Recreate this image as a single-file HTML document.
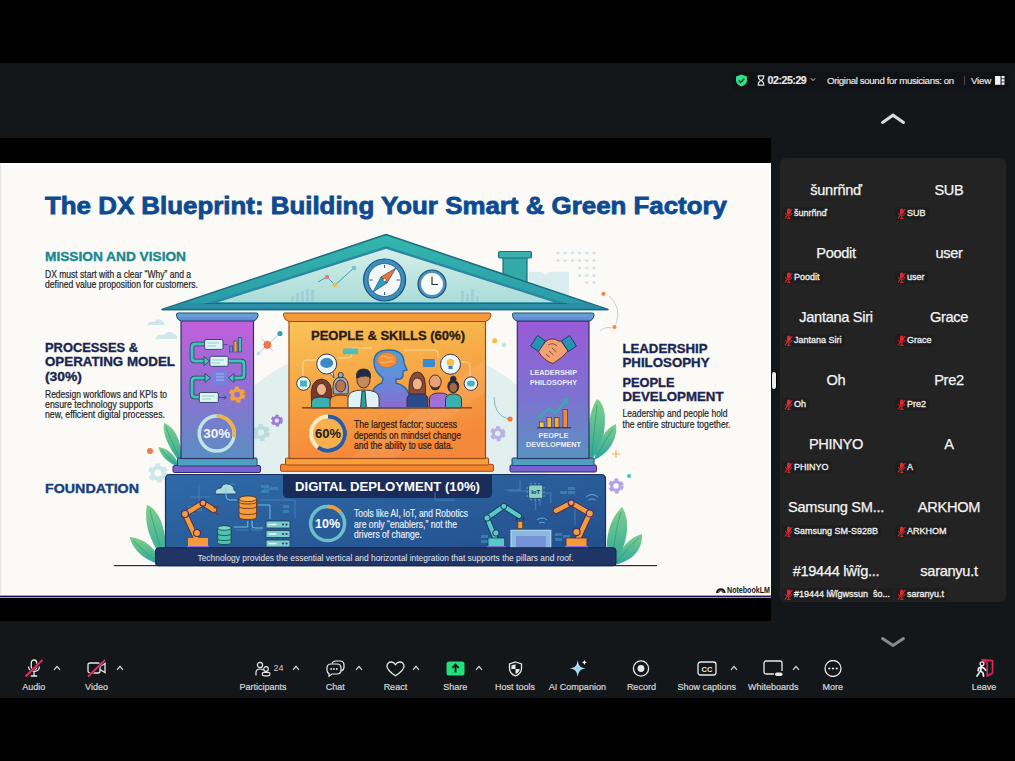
<!DOCTYPE html>
<html><head><meta charset="utf-8">
<style>
*{margin:0;padding:0;box-sizing:border-box}
html,body{width:1015px;height:761px;overflow:hidden;background:#000;font-family:"Liberation Sans",sans-serif}
.a{position:absolute;white-space:nowrap}
#win{position:absolute;left:0;top:63px;width:1015px;height:635px;background:#14171a}
#share{position:absolute;left:0;top:138px;width:771px;height:483px;background:#000}
#slide{position:absolute;left:0;top:163px;width:771px;height:435px;background:#fbfaf7;overflow:hidden}
#panel{position:absolute;left:780px;top:158px;width:226px;height:444px;background:#232323;border-radius:6px}
.pill{position:absolute;left:732px;top:72px;width:277px;height:18px;background:#101215;border-radius:5px}
.tb{color:#ececec;font-size:10px;-webkit-text-stroke:0.15px #ececec}
.lbl{position:absolute;top:682px;color:#d6d6d6;-webkit-text-stroke:0.2px #d6d6d6;font-size:9px;white-space:nowrap;text-align:center}
.big{position:absolute;color:#f4f4f4;-webkit-text-stroke:0.25px #f4f4f4;font-size:14.6px;letter-spacing:-0.3px;white-space:nowrap;text-align:center;width:112px}
.sm{position:absolute;height:13px;background:#1e1e1e;-webkit-text-stroke:0.3px #f0f0f0;border-radius:3px;color:#f0f0f0;font-size:9px;line-height:13px;white-space:nowrap;padding-left:12px;padding-right:3px}
.sm svg{position:absolute;left:2px;top:1px}
</style></head>
<body>
<div id="win"></div>
<div class="pill"></div>
<!-- top bar -->
<svg class="a" style="left:735px;top:74px" width="13" height="13" viewBox="0 0 13 13"><path d="M6.5 0.5 L12 2.5 V6.5 C12 9.5 9.5 11.5 6.5 12.5 C3.5 11.5 1 9.5 1 6.5 V2.5 Z" fill="#2fe08b"/><path d="M3.8 6.6 L5.7 8.4 L9.2 4.8" stroke="#0e3a22" stroke-width="1.4" fill="none"/></svg>
<svg class="a" style="left:757px;top:75px" width="8" height="11" viewBox="0 0 8 11"><path d="M0.6 0.8 H7.4 M0.6 10.2 H7.4 M1.5 0.8 V3.2 L3.6 5.5 L1.5 7.8 V10.2 M6.5 0.8 V3.2 L4.4 5.5 L6.5 7.8 V10.2" stroke="#e0e0e0" stroke-width="1.2" fill="none"/></svg>
<div class="a tb" style="left:767.5px;top:74.3px;font-weight:bold;font-size:10.6px;letter-spacing:-0.45px">02:25:29</div>
<svg class="a" style="left:810px;top:77px" width="6" height="5" viewBox="0 0 6 5"><path d="M0.8 1.2 L3 3.6 L5.2 1.2" stroke="#ccc" stroke-width="1" fill="none"/></svg>
<div class="a tb" style="left:827px;top:75px;font-size:9.7px;letter-spacing:-0.36px">Original sound for musicians: on</div>
<div class="a" style="left:963.5px;top:76px;width:1px;height:9px;background:#45484b"></div>
<div class="a tb" style="left:971px;top:75px;font-size:9.7px;letter-spacing:-0.2px">View</div>
<svg class="a" style="left:995px;top:75.5px" width="10" height="9" viewBox="0 0 10 9"><rect x="0" y="0" width="5.5" height="8.8" fill="#f2f2f2"/><rect x="6.5" y="0" width="3" height="2.4" fill="#f2f2f2"/><rect x="6.5" y="3.2" width="3" height="2.4" fill="#f2f2f2"/><rect x="6.5" y="6.4" width="3" height="2.4" fill="#f2f2f2"/></svg>
<svg class="a" style="left:880px;top:112px" width="26" height="14" viewBox="0 0 26 14"><path d="M2.5 10.5 L13 3.2 L23.5 10.5" stroke="#dcdcdc" stroke-width="3" stroke-linecap="round" fill="none"/></svg>
<svg class="a" style="left:880px;top:634px" width="26" height="14" viewBox="0 0 26 14"><path d="M2.5 4.5 L13 11.5 L23.5 4.5" stroke="#8a8a8a" stroke-width="3" stroke-linecap="round" fill="none"/></svg>

<div id="share"></div>
<div id="slide">
<svg width="771" height="435" viewBox="0 163 771 435" style="position:absolute;left:0;top:0">
<defs>
<linearGradient id="gL" x1="0" y1="0" x2="0" y2="1"><stop offset="0" stop-color="#c25fdc"/><stop offset="0.5" stop-color="#8f70d2"/><stop offset="1" stop-color="#5b8dc2"/></linearGradient>
<linearGradient id="gR" x1="0" y1="0" x2="0" y2="1"><stop offset="0" stop-color="#9a5ad8"/><stop offset="0.55" stop-color="#7c72d0"/><stop offset="1" stop-color="#5a92c0"/></linearGradient>
<linearGradient id="gC" x1="0" y1="0" x2="0.25" y2="1"><stop offset="0" stop-color="#f9c457"/><stop offset="0.45" stop-color="#f7a946"/><stop offset="1" stop-color="#f5883a"/></linearGradient>
<linearGradient id="gRoof" x1="0" y1="0" x2="0" y2="1"><stop offset="0" stop-color="#33b8ae"/><stop offset="1" stop-color="#2a9aa8"/></linearGradient>
<linearGradient id="gRoofIn" x1="0" y1="0" x2="0" y2="1"><stop offset="0" stop-color="#d4efea"/><stop offset="1" stop-color="#a9dcd8"/></linearGradient>
<linearGradient id="gF" x1="0" y1="0" x2="1" y2="1"><stop offset="0" stop-color="#2f6aa8"/><stop offset="1" stop-color="#234f8c"/></linearGradient>
<linearGradient id="gCap" x1="0" y1="0" x2="0" y2="1"><stop offset="0" stop-color="#5cb0d8"/><stop offset="1" stop-color="#6a7ed0"/></linearGradient><linearGradient id="gLeaf" x1="0" y1="0" x2="0" y2="1"><stop offset="0" stop-color="#7fd08a"/><stop offset="1" stop-color="#2aa59a"/></linearGradient>
</defs>
<rect x="0" y="163" width="771" height="435" fill="#fbfaf7"/><rect x="0" y="163" width="771" height="2" fill="#ffffff"/><rect x="769" y="163" width="2" height="433" fill="#ffffff"/><rect x="0" y="163" width="1.2" height="433" fill="#e6e6e6"/>
<!-- pale background blobs -->
<ellipse cx="386" cy="452" rx="165" ry="110" fill="#e2efef"/>
<path d="M147 325 q3 -5 7 -3 q4 -5 8 -1 q3 1 2 4 z" fill="#cfe6ec"/>
<path d="M155 339 q3 -6 9 -4 q5 -6 10 -1 q4 1 3 5 z" fill="#d0e8ec"/>
<!-- title -->
<text x="45" y="214.3" textLength="682" lengthAdjust="spacingAndGlyphs" font-family="Liberation Sans" font-weight="bold" font-size="23.6" fill="#0e4a92" stroke="#0e4a92" stroke-width="0.8">The DX Blueprint: Building Your Smart &amp; Green Factory</text>
<!-- left texts -->
<text x="45" y="261" textLength="141" lengthAdjust="spacingAndGlyphs" font-family="Liberation Sans" font-weight="bold" font-size="13" fill="#1a8792" stroke="#1a8792" stroke-width="0.35">MISSION AND VISION</text>
<g font-family="Liberation Sans" font-size="10.6" fill="#262626" stroke="#262626" stroke-width="0.22">
<text x="45" y="277.5" textLength="146" lengthAdjust="spacingAndGlyphs">DX must start with a clear “Why” and a</text>
<text x="45" y="287.5" textLength="153" lengthAdjust="spacingAndGlyphs">defined value proposition for customers.</text>
</g>
<g font-family="Liberation Sans" font-weight="bold" font-size="13" fill="#1a2650" stroke="#1a2650" stroke-width="0.35">
<text x="45" y="352" textLength="93" lengthAdjust="spacingAndGlyphs">PROCESSES &amp;</text>
<text x="45" y="366" textLength="130" lengthAdjust="spacingAndGlyphs">OPERATING MODEL</text>
<text x="45" y="380.5" textLength="37" lengthAdjust="spacingAndGlyphs">(30%)</text>
</g>
<g font-family="Liberation Sans" font-size="10.6" fill="#262626" stroke="#262626" stroke-width="0.22">
<text x="45" y="397.5" textLength="122" lengthAdjust="spacingAndGlyphs">Redesign workflows and KPIs to</text>
<text x="45" y="407.5" textLength="108" lengthAdjust="spacingAndGlyphs">ensure technology supports</text>
<text x="45" y="417.5" textLength="120" lengthAdjust="spacingAndGlyphs">new, efficient digital processes.</text>
</g>
<text x="45" y="492.5" textLength="94" lengthAdjust="spacingAndGlyphs" font-family="Liberation Sans" font-weight="bold" font-size="13" fill="#17407c" stroke="#17407c" stroke-width="0.35">FOUNDATION</text>
<!-- right texts -->
<g font-family="Liberation Sans" font-weight="bold" font-size="13" fill="#1a2650" stroke="#1a2650" stroke-width="0.35">
<text x="622.5" y="353" textLength="85" lengthAdjust="spacingAndGlyphs">LEADERSHIP</text>
<text x="622.5" y="367" textLength="87" lengthAdjust="spacingAndGlyphs">PHILOSOPHY</text>
<text x="622.5" y="386.5" textLength="52" lengthAdjust="spacingAndGlyphs">PEOPLE</text>
<text x="622.5" y="400.7" textLength="101" lengthAdjust="spacingAndGlyphs">DEVELOPMENT</text>
</g>
<g font-family="Liberation Sans" font-size="10.6" fill="#262626" stroke="#262626" stroke-width="0.22">
<text x="622.5" y="417" textLength="105" lengthAdjust="spacingAndGlyphs">Leadership and people hold</text>
<text x="622.5" y="427.5" textLength="108" lengthAdjust="spacingAndGlyphs">the entire structure together.</text>
</g>
<!-- dots pattern near chimney -->
<g fill="#cfe6ea"><circle cx="558" cy="253" r="1.6"/><circle cx="565.2" cy="253" r="1.6"/><circle cx="572.4" cy="253" r="1.6"/><circle cx="579.6" cy="253" r="1.6"/><circle cx="586.8" cy="253" r="1.6"/><circle cx="594" cy="253" r="1.6"/><circle cx="558" cy="260.5" r="1.6"/><circle cx="565.2" cy="260.5" r="1.6"/><circle cx="572.4" cy="260.5" r="1.6"/><circle cx="579.6" cy="260.5" r="1.6"/><circle cx="586.8" cy="260.5" r="1.6"/><circle cx="594" cy="260.5" r="1.6"/><circle cx="579.6" cy="268" r="1.6"/><circle cx="586.8" cy="268" r="1.6"/><circle cx="594" cy="268" r="1.6"/><circle cx="579.6" cy="275.5" r="1.6"/><circle cx="586.8" cy="275.5" r="1.6"/><circle cx="594" cy="275.5" r="1.6"/><circle cx="586.8" cy="282.5" r="1.6"/><circle cx="594" cy="282.5" r="1.6"/></g>
<path d="M529 300 V271.7 H541 L545 275 L549 271.7 H569 V300 Z" fill="#d8edf0"/>
<!-- chimney -->
<rect x="503" y="257" width="24" height="40" fill="#34aaa8" stroke="#1f6c7c" stroke-width="1.2"/>
<rect x="498.5" y="251.5" width="33" height="6.5" rx="1.5" fill="#38b0ae" stroke="#1f6c7c" stroke-width="1.2"/>
<!-- roof -->
<path d="M162 309.5 L386 234.5 L608 309.5 Z" fill="url(#gRoof)" stroke="#1e6b7d" stroke-width="1.5" stroke-linejoin="round"/>
<path d="M210 303.5 L386 247.5 L562 303.5 Z" fill="url(#gRoofIn)" stroke="#2a88a2" stroke-width="2.4" stroke-linejoin="round"/>
<path d="M163 309.5 L183 303 H587 L607 309.5 Z" fill="#2a8fa6"/><path d="M205 303.5 H567" stroke="#1e6b7d" stroke-width="1.2"/><path d="M162 309.5 H608" stroke="#1e6b7d" stroke-width="1.5"/>
<!-- roof inner decorations -->
<g fill="#9fd0d5">
<rect x="291" y="296" width="3" height="6"/><rect x="296" y="293" width="3" height="9"/><rect x="301" y="291" width="3" height="11"/><rect x="306" y="289" width="3" height="13"/><rect x="311" y="290" width="3" height="12"/>
<rect x="461" y="291" width="3" height="11"/><rect x="466" y="294" width="3" height="8"/><rect x="471" y="289" width="3" height="13"/><rect x="476" y="296" width="3" height="6"/>
</g>
<path d="M318 282 L327 277 L335 285 L354 268" stroke="#4a9aa8" stroke-width="1" fill="none"/>
<circle cx="327" cy="277" r="2.3" fill="#e87a8a"/><circle cx="335" cy="285" r="2.3" fill="#f0c040"/><circle cx="354" cy="268" r="2.3" fill="#7cc0d0"/>
<!-- compass -->
<circle cx="384.6" cy="280" r="21" fill="#3a8fbf" stroke="#1f4f7a" stroke-width="1.2"/>
<circle cx="384.6" cy="280" r="16.5" fill="#f2f8f8" stroke="#1f4f7a" stroke-width="0.8"/>
<path d="M396 268 L387 283 L381 277 Z" fill="#f0703a" stroke="#1a3a5a" stroke-width="0.6"/><path d="M373 292 L381 277 L387 283 Z" fill="#2a9fc0" stroke="#1a3a5a" stroke-width="0.6"/>
<circle cx="384.6" cy="280" r="1.6" fill="#fff" stroke="#333" stroke-width="0.5"/>
<g stroke="#33556a" stroke-width="1"><path d="M384.6 265 v3 M384.6 292 v3 M369.5 280 h3 M396.7 280 h3"/></g>
<!-- clock -->
<circle cx="432" cy="284" r="14" fill="#4a8fc0" stroke="#1f4f7a" stroke-width="1.2"/>
<circle cx="432" cy="284" r="11" fill="#f7fbfb"/>
<path d="M432 276.5 V284.5 H438" stroke="#333" stroke-width="1.2" fill="none"/>

<!-- side decorations -->
<path d="M258.5 353.5 L267.4 344.8 L280 333.5 M261 338 L273 351" stroke="#a8c4d0" stroke-width="0.8" fill="none"/>
<circle cx="267.4" cy="344.8" r="3.6" fill="#f07a4a" stroke="#c05a3a" stroke-width="0.6"/><circle cx="280" cy="333.5" r="2.6" fill="#3aa0b0"/><circle cx="258.5" cy="353.5" r="2" fill="#bfdde6"/>
<path d="M181 464 C172 452 162 437 164 423 C177 428 183 446 181 464 Z" fill="url(#gLeaf)"/><path d="M178 467 C169 463 160 456 158.5 447 C168 448 176 456 179 466 Z" fill="url(#gLeaf)"/><path d="M180 460 C175 448 169 436 166 427 M177 465 C171 460 165 454 161 449" stroke="#2a8a80" stroke-width="0.6" fill="none"/>
<circle cx="150" cy="451" r="3" fill="#f07a4a"/>
<g><circle cx="276.8" cy="420.6" r="3.41" fill="none" stroke="#9a78dc" stroke-width="2.48"/><circle cx="276.8" cy="420.6" r="5.06" fill="none" stroke="#9a78dc" stroke-width="1.92" stroke-dasharray="3.03 2.48"/></g>
<g><circle cx="261" cy="432.6" r="4.96" fill="none" stroke="#b8dce2" stroke-width="3.60"/><circle cx="261" cy="432.6" r="7.36" fill="none" stroke="#b8dce2" stroke-width="2.80" stroke-dasharray="4.40 3.60"/></g>
<g><circle cx="158" cy="473" r="5.58" fill="none" stroke="#d0e6ea" stroke-width="4.05"/><circle cx="158" cy="473" r="8.28" fill="none" stroke="#d0e6ea" stroke-width="3.15" stroke-dasharray="4.95 4.05"/></g>
<path d="M590 462 C586 440 588 412 597 399 C607 404 607 428 600 448 Z" fill="url(#gLeaf)"/><path d="M594 460 C598 442 605 428 616 424 C618 440 608 454 594 460 Z" fill="url(#gLeaf)"/><path d="M592 455 C594 430 596 415 597 405 M597 455 C603 445 608 436 613 429" stroke="#2a8a80" stroke-width="0.6" fill="none"/>
<circle cx="494.7" cy="340.7" r="2.5" fill="#f0c040"/><circle cx="504" cy="345" r="2.3" fill="#c0e0e6"/><path d="M494 397 q0 18 14 22" stroke="#6ab8c0" stroke-width="0.9" fill="none"/><circle cx="510" cy="419" r="2.6" fill="#f07a3a"/>
<path d="M609 296 Q622 308 616 324" stroke="#bcd4dc" stroke-width="1" fill="none"/><path d="M600 331 Q606 326 612 328" stroke="#bcd4dc" stroke-width="1" fill="none"/>
<circle cx="603.4" cy="293.8" r="2.1" fill="#f08a4a"/><circle cx="614.5" cy="327" r="2.1" fill="#f08a4a"/>
<g><circle cx="616" cy="486" r="4.34" fill="none" stroke="#b4a2e4" stroke-width="3.15"/><circle cx="616" cy="486" r="6.44" fill="none" stroke="#b4a2e4" stroke-width="2.45" stroke-dasharray="3.85 3.15"/></g><path d="M616 450 v8 M612 454 h8" stroke="#f2b060" stroke-width="1.2"/>
<g><circle cx="497.7" cy="433.6" r="4.34" fill="none" stroke="#b8b0e4" stroke-width="3.15"/><circle cx="497.7" cy="433.6" r="6.44" fill="none" stroke="#b8b0e4" stroke-width="2.45" stroke-dasharray="3.85 3.15"/></g>
<circle cx="629" cy="476" r="2" fill="#4ac0c8"/>
<!-- LEFT PILLAR -->
<rect x="173" y="465.5" width="87.5" height="7" rx="1.5" fill="#7a5fd0" stroke="#2a2a6a" stroke-width="1"/>
<rect x="177.5" y="458" width="79.5" height="8" rx="1" fill="#4f9fc0" stroke="#24456a" stroke-width="1"/>
<rect x="181" y="320.5" width="72.5" height="138" fill="url(#gL)" stroke="#2a3566" stroke-width="1.2"/>
<path d="M178 313 H256.5 Q258.5 313 258 315.5 Q257 320.5 253 321 H181.5 Q177.5 320.5 176.5 315.5 Q176 313 178 313 Z" fill="url(#gCap)" stroke="#24456a" stroke-width="1"/>
<!-- flow icons left pillar -->
<g fill="none" stroke-linejoin="round">
<path d="M204 344 H195 Q192 344 192 347 V358 Q192 361 195 361 H205" stroke="#2a3a6a" stroke-width="4.6"/>
<path d="M229 361 H241 Q244 361 244 364 V375 Q244 378 241 378 H232" stroke="#2a3a6a" stroke-width="4.6"/>
<path d="M199 397 H195 Q192 397 192 394 V381 Q192 378 195 378 H206" stroke="#2a3a6a" stroke-width="4.6"/>
<path d="M204 344 H195 Q192 344 192 347 V358 Q192 361 195 361 H205" stroke="#40c4b4" stroke-width="3"/>
<path d="M229 361 H241 Q244 361 244 364 V375 Q244 378 241 378 H232" stroke="#40c4b4" stroke-width="3"/>
<path d="M199 397 H195 Q192 397 192 394 V381 Q192 378 195 378 H206" stroke="#40c4b4" stroke-width="3"/>
</g>
<g fill="#40c4b4" stroke="#2a3a6a" stroke-width="0.8" stroke-linejoin="round">
<path d="M204 356.5 L209.5 361 L204 365.5 Z"/><path d="M234 373.5 L228.5 378 L234 382.5 Z"/><path d="M205 373.5 L210.5 378 L205 382.5 Z"/>
</g>
<g fill="#dff5f2" stroke="#2a3a6a" stroke-width="0.9">
<rect x="204.6" y="339.5" width="18.4" height="9.9" rx="1.5"/>
<rect x="209.9" y="356.3" width="18.3" height="10" rx="1.5"/>
<rect x="199.3" y="392.5" width="19" height="10" rx="1.5"/>
</g>
<g stroke="#7ac8c0" stroke-width="0.8"><path d="M207 343 h12 M207 346 h9 M212 360 h12 M212 363 h8 M202 396 h12 M202 399 h9"/></g>
<path d="M223.5 344.5 h4" stroke="#3a3a6a" stroke-width="0.7"/>
<g stroke="#2a3a6a" stroke-width="0.6"><rect x="229.5" y="346" width="3" height="6" fill="#5a8ad8"/><rect x="234" y="341" width="3" height="11" fill="#f2a840"/><rect x="238.5" y="337.5" width="3" height="14.5" fill="#40c4b4"/></g>
<rect x="212.5" y="370.5" width="14.7" height="14.7" fill="#6a8ae0" opacity="0.75"/>
<g stroke="#c8d8f8" stroke-width="0.8" opacity="0.8"><path d="M216 374 h8 M216 377 h8 M216 380 h8"/></g>
<path d="M219 397.5 h7 M224 395.5 l2 2 l-2 2" stroke="#2a3a6a" stroke-width="0.8" fill="none"/>
<g><circle cx="237.2" cy="394.6" r="4.65" fill="none" stroke="#f2a23a" stroke-width="3.38"/><circle cx="237.2" cy="394.6" r="6.90" fill="none" stroke="#f2a23a" stroke-width="2.62" stroke-dasharray="4.12 3.38"/></g>
<circle cx="216.7" cy="433.6" r="17.5" fill="none" stroke="#bfe4e6" stroke-width="3.5"/>
<path d="M216.7 416.1 A17.5 17.5 0 0 1 234 437" fill="none" stroke="#f2b23c" stroke-width="3.5"/>
<text x="216.7" y="438.3" text-anchor="middle" textLength="27" lengthAdjust="spacingAndGlyphs" font-family="Liberation Sans" font-weight="bold" font-size="12.5" fill="#f4f6fa">30%</text>
<!-- CENTER BOX -->
<rect x="280.5" y="464.3" width="213" height="7" rx="1.5" fill="#f5862e" stroke="#9a4a1a" stroke-width="1"/>
<rect x="285.5" y="458" width="203" height="7" rx="1" fill="#f7a03a" stroke="#9a4a1a" stroke-width="1"/>
<rect x="289" y="321" width="196.5" height="137.5" fill="url(#gC)" stroke="#9a4a1a" stroke-width="1.2"/>
<path d="M284.5 313 H489.5 Q491.5 313 491 315.5 Q490 320.5 485.5 321.5 H289 Q284.5 320.5 283.5 315.5 Q283 313 284.5 313 Z" fill="#f59a38" stroke="#9a4a1a" stroke-width="1"/><path d="M350 458 L395 458 L485 392 L485 360 Z" fill="#ffffff" opacity="0.08"/>
<text x="311" y="339.7" textLength="154" lengthAdjust="spacingAndGlyphs" font-family="Liberation Sans" font-weight="bold" font-size="12.5" fill="#2a1a12" stroke="#2a1a12" stroke-width="0.3">PEOPLE &amp; SKILLS (60%)</text>
<!-- network lines -->
<g stroke="#fbe0a8" stroke-width="0.9" fill="none">
<path d="M303 376 v-12 q0 -4 4 -4 h10"/><path d="M338 358 h10 q4 0 4 -4 v-6 h20"/><path d="M404 350 h30 q4 0 4 4 v4"/><path d="M460 362 h6 q4 0 4 4 v12"/>
</g>
<rect x="343" y="349" width="14" height="5" rx="1" fill="#4ac0c0"/>
<rect x="423" y="359" width="12" height="7" rx="1" fill="#3a8ad0"/>
<!-- big silhouette -->
<defs><linearGradient id="gSil" x1="0" y1="0" x2="0" y2="1"><stop offset="0" stop-color="#4aa2dc"/><stop offset="0.6" stop-color="#6a86d8"/><stop offset="1" stop-color="#8a6ad0"/></linearGradient></defs>
<path d="M372 408 V396 Q372 386 382 383 L383 378 Q374 372 374 362 Q374 350 389 350 Q404 350 404 363 L407 370 L403 371 L403 376 Q402 380 396 379 L396 383 Q408 386 409 396 V408 Z" fill="url(#gSil)" stroke="#2a6aa8" stroke-width="1.4"/>
<ellipse cx="387" cy="360" rx="10" ry="7.5" fill="#f5903a" stroke="#c0602a" stroke-width="0.6"/>
<path d="M381 357 q3 -2 6 0 q3 2 6 0 M380 362 q4 2 8 0 q3 -2 6 0" stroke="#fbc080" stroke-width="0.8" fill="none"/>
<!-- speech bubbles -->
<circle cx="326.7" cy="364" r="10" fill="#eef7f8" stroke="#3a3a4a" stroke-width="1"/><ellipse cx="326.7" cy="363" rx="6.5" ry="5" fill="#3a88c8"/>
<path d="M330 373 l4 5 l-1 -6z" fill="#eef7f8" stroke="#3a3a4a" stroke-width="0.8"/>
<circle cx="450.5" cy="364.3" r="10" fill="#eef7f8" stroke="#3a3a4a" stroke-width="1"/><circle cx="450.5" cy="362.5" r="3.8" fill="#f5c040"/><rect x="448.5" y="366" width="4" height="3" fill="#3a7ac0"/>
<circle cx="303.5" cy="383.5" r="6.8" fill="#e6f3f4" stroke="#3a3a4a" stroke-width="1"/><rect x="300" y="380.5" width="7" height="6" fill="#4ab0c0"/>
<circle cx="470.9" cy="383.6" r="6.8" fill="#e6f3f4" stroke="#3a3a4a" stroke-width="1"/><ellipse cx="470.9" cy="383.6" rx="4" ry="3" fill="#4ab0c0"/>
<rect x="343" y="348.5" width="15" height="5.7" rx="1" fill="#4ac0c0"/>
<rect x="422.8" y="361" width="11.8" height="6" rx="1" fill="#3a8ad0"/>
<!-- people -->
<g stroke="#3a2a2a" stroke-width="0.9">
<path d="M311.5 401 Q309 380 321.5 379 Q334 380 331.5 401 Z" fill="#7a3a2a"/>
<path d="M311.5 408 v-6 q0 -5 10 -5 q10 0 10 5 v6z" fill="#3ab0b0"/>
<ellipse cx="321.5" cy="389.5" rx="5" ry="6" fill="#f2b08a"/>
<path d="M330 408 v-7 q0 -6 10.7 -6 q10.7 0 10.7 6 v7z" fill="#f59a3a"/>
<path d="M333.5 394 Q331 377 340.7 377 Q350.5 377 348 394 Z" fill="#9aa8c8"/><circle cx="340.7" cy="375" r="2.6" fill="#9aa8c8"/>
<ellipse cx="340.7" cy="386" rx="5" ry="6" fill="#b8764e"/>
<path d="M348 408 v-10 q0 -8 15.5 -8 q15.5 0 15.5 8 v10z" fill="#dff2f6"/>
<path d="M362 391 h3 l1.5 17 h-6z" fill="#2aa0a0"/>
<ellipse cx="363.5" cy="380" rx="6.5" ry="8" fill="#c48a5a"/><path d="M356.5 378 q-1 -9 7 -9 q8 0 7 9 q-3 -4 -14 0z" fill="#1e2a4a"/>
<path d="M407 408 v-9 q0 -6 10.5 -6 q10.5 0 10.5 6 v9z" fill="#2a4a8a"/>
<path d="M409 394 q-1 -22 8.3 -22 q9.3 0 8.3 22z" fill="#8a4a3a"/>
<ellipse cx="417.3" cy="384" rx="5" ry="6" fill="#f4b28a"/>
<path d="M429.5 408 v-9 q0 -6 10 -6 q10 0 10 6 v9z" fill="#a070d8"/>
<ellipse cx="435.2" cy="382" rx="6" ry="7" fill="#e8a07a"/><path d="M431 386 q4 4 8.5 0 l-1 3 q-3 2 -6.5 0z" fill="#3a3a4a"/>
<path d="M445.5 408 v-8 q0 -6 8 -6 q8 0 8 6 v8z" fill="#3ab0b0"/>
<ellipse cx="453.3" cy="386.4" rx="5.5" ry="6.5" fill="#1e2a4a"/><ellipse cx="453.3" cy="387.5" rx="4.2" ry="5" fill="#a06a48"/><circle cx="453.3" cy="379" r="2.8" fill="#1e2a4a"/>
</g>
<rect x="302" y="407" width="170" height="1.6" fill="#8a4a20"/>
<!-- 60% ring -->
<circle cx="328" cy="433.6" r="19" fill="#f7b04c"/>
<circle cx="328" cy="433.6" r="17" fill="none" stroke="#fbe9c0" stroke-width="4"/>
<path d="M328 416.6 A17 17 0 1 1 318 447.4" fill="none" stroke="#2a5aa0" stroke-width="4"/>
<text x="328" y="438.2" text-anchor="middle" textLength="26" lengthAdjust="spacingAndGlyphs" font-family="Liberation Sans" font-weight="bold" font-size="12.5" fill="#1a1a1a">60%</text>
<g font-family="Liberation Sans" font-size="10.6" fill="#2a1a12" stroke="#2a1a12" stroke-width="0.22">
<text x="354" y="428.3" textLength="103" lengthAdjust="spacingAndGlyphs">The largest factor; success</text>
<text x="354" y="438.5" textLength="107" lengthAdjust="spacingAndGlyphs">depends on mindset change</text>
<text x="354" y="448.6" textLength="99" lengthAdjust="spacingAndGlyphs">and the ability to use data.</text>
</g>
<!-- RIGHT PILLAR -->
<rect x="510" y="465" width="86.5" height="7" rx="1.5" fill="#7a5fd0" stroke="#2a2a6a" stroke-width="1"/>
<rect x="512" y="458" width="82" height="7.5" rx="1" fill="#4f9fc0" stroke="#24456a" stroke-width="1"/>
<rect x="517.3" y="321" width="71.7" height="137.5" fill="url(#gR)" stroke="#2a3566" stroke-width="1.2"/>
<path d="M513.5 313 H592.5 Q594.5 313 594 315.5 Q593 320.5 589 321 H517.3 Q513.5 320.5 512.5 315.5 Q512 313 513.5 313 Z" fill="url(#gCap)" stroke="#24456a" stroke-width="1"/>
<!-- handshake -->
<path d="M538 351 L545.5 341.5 Q552 336.5 558.5 341 L561 341 L568 351 Q562 358 553 363.5 Q544 361 538 351 Z" fill="#f2a272" stroke="#5a2a1a" stroke-width="0.9" stroke-linejoin="round"/>
<path d="M546 354 l4 3.5 M549 351 l4.5 4 M552 348 l4.5 4 M548 345 q5 -3 9 1" stroke="#5a2a1a" stroke-width="0.7" fill="none"/>
<path d="M530.5 346 L537.5 335.5 L545.5 341 L538.5 351.5 Z" fill="#2a8fb4" stroke="#1a3a5a" stroke-width="0.9" stroke-linejoin="round"/>
<path d="M576.5 346 L569.5 335.5 L561.5 341 L568.5 351.5 Z" fill="#2a8fb4" stroke="#1a3a5a" stroke-width="0.9" stroke-linejoin="round"/>
<g font-family="Liberation Sans" font-weight="bold" font-size="7.5" fill="#e8eef8" text-anchor="middle">
<text x="553.5" y="375" textLength="47" lengthAdjust="spacingAndGlyphs">LEADERSHIP</text>
<text x="553.5" y="385" textLength="47" lengthAdjust="spacingAndGlyphs">PHILOSOPHY</text>
<text x="553.5" y="438" textLength="30" lengthAdjust="spacingAndGlyphs">PEOPLE</text>
<text x="553.5" y="447" textLength="55" lengthAdjust="spacingAndGlyphs">DEVELOPMENT</text>
</g>
<g stroke="#3a2a4a" stroke-width="0.6">
<rect x="539.5" y="422" width="4.5" height="5.5" fill="#f7c640"/><rect x="547" y="417.5" width="4.5" height="10" fill="#f6b63c"/><rect x="554.5" y="417.5" width="4.5" height="10" fill="#f6a83a"/><rect x="563" y="409.5" width="4.5" height="18" fill="#f5893a"/>
</g>
<path d="M538 418 L549 408.5 L555 413 L567 400" stroke="#2fb0a8" stroke-width="2" fill="none" stroke-linejoin="round"/>
<path d="M562 399 L568.5 397.5 L567.5 404 Z" fill="#2fb0a8"/>
<rect x="537" y="427.3" width="34" height="1" fill="#2a2a4a"/>

<!-- plants -->
<path d="M166 563 C152 546 143 525 147 505 C161 510 168 535 166 563 Z" fill="url(#gLeaf)"/><path d="M163 565 C147 562 133 551 129.5 537 C144 538 156 548 163 565 Z" fill="url(#gLeaf)"/><path d="M164 558 C158 540 153 523 150 510 M160 563 C150 556 140 548 133 540" stroke="#2a8a80" stroke-width="0.6" fill="none"/>

<path d="M610 565 C603 545 608 520 622 507 C631 520 628 545 614 565 Z" fill="url(#gLeaf)"/><path d="M614 565 C620 548 630 537 642 534 C643 550 632 561 614 565 Z" fill="url(#gLeaf)"/><path d="M613 560 C614 540 617 525 621 512 M617 562 C624 552 632 544 639 538" stroke="#2a8a80" stroke-width="0.6" fill="none"/>
<!-- ground line -->
<rect x="114" y="565" width="543" height="1.2" fill="#2a2a3a"/>
<!-- main box -->
<rect x="165.5" y="474.5" width="440" height="80" rx="4" fill="url(#gF)" stroke="#1a2f5a" stroke-width="1.2"/>
<!-- banner -->
<path d="M283 474.5 H492 V493 q0 5 -5 5 H288 q-5 0 -5 -5z" fill="#1a2c5a"/>
<text x="295" y="491" textLength="185" lengthAdjust="spacingAndGlyphs" font-family="Liberation Sans" font-weight="bold" font-size="13.5" fill="#ffffff">DIGITAL DEPLOYMENT (10%)</text>
<!-- circuit lines -->
<g stroke="#4a90c8" stroke-width="0.9" fill="none" opacity="0.8">
<path d="M199 485 v16 M190 497 h20"/><path d="M236 484 h-8 v4"/><path d="M270 489 h-6 v4"/>
<path d="M260 500 h35 v18"/><path d="M248 530 h-12"/><path d="M252 520 v10 h10"/>
<path d="M520 480 v10 h-15"/><path d="M530 493 h10 v12"/><path d="M575 505 v20"/><path d="M435 492 v8 h20"/>
</g>
<g fill="#3a8fb8" opacity="0.7">
<rect x="188" y="506" width="6" height="3"/><rect x="188" y="511" width="6" height="3"/><rect x="196" y="508" width="6" height="3"/>
<rect x="261" y="485" width="8" height="3"/><rect x="261" y="490" width="8" height="3"/><rect x="270" y="487" width="8" height="3"/>
<rect x="560" y="491" width="7" height="3"/><rect x="568" y="487" width="7" height="3"/><rect x="568" y="491" width="7" height="3"/>
<rect x="555" y="538" width="7" height="3"/><rect x="555" y="533" width="7" height="3"/><rect x="563" y="535" width="7" height="3"/>
<rect x="481" y="535" width="7" height="3"/><rect x="481" y="540" width="7" height="3"/><rect x="489" y="537" width="7" height="3"/>
<rect x="283" y="505" width="6" height="3"/><rect x="283" y="510" width="6" height="3"/>
</g>
<!-- cloud -->
<path d="M215 494 q0 -6 6 -6 q2 -5 7 -4 q6 1 6 6 q3 1 2 4z" fill="#a8dce0" stroke="#1a3a5a" stroke-width="0.8"/>
<!-- orange db -->
<g stroke="#5a2a1a" stroke-width="0.8" fill="#f59a3a">
<path d="M239 513 v4 q0 2.5 8.8 2.5 q8.8 0 8.8 -2.5 v-4"/>
<path d="M239 507 v5 q0 2.5 8.8 2.5 q8.8 0 8.8 -2.5 v-5"/>
<path d="M239 501 v5 q0 2.5 8.8 2.5 q8.8 0 8.8 -2.5 v-5"/>
<ellipse cx="247.8" cy="499" rx="8.8" ry="2.8" fill="#f8b050"/>
<path d="M239 499 v2.5 q0 2.5 8.8 2.5 q8.8 0 8.8 -2.5 v-2.5"/>
</g>
<ellipse cx="247.8" cy="498.8" rx="8.8" ry="2.8" fill="#f8b050" stroke="#5a2a1a" stroke-width="0.8"/>
<!-- teal db -->
<g stroke="#1a3a4a" stroke-width="0.8" fill="#4cc4ae">
<path d="M217.6 539 v3.5 q0 2 6.7 2 q6.7 0 6.7 -2 v-3.5"/>
<path d="M217.6 534 v4.5 q0 2 6.7 2 q6.7 0 6.7 -2 v-4.5"/>
<path d="M217.6 529 v4.5 q0 2 6.7 2 q6.7 0 6.7 -2 v-4.5"/>
</g>
<ellipse cx="224.3" cy="528" rx="6.7" ry="2.3" fill="#7ad8c4" stroke="#1a3a4a" stroke-width="0.8"/>
<!-- server rack -->
<g fill="#7fcccc" stroke="#1a3a5a" stroke-width="0.8">
<rect x="266" y="521" width="24" height="7" rx="1"/><rect x="266" y="530.5" width="24" height="7" rx="1"/><rect x="266" y="540" width="24" height="7" rx="1"/>
</g>
<g fill="#1a3a5a"><rect x="268.5" y="523.8" width="8" height="1.5" fill="#e8f8f8"/><rect x="268.5" y="533.3" width="8" height="1.5" fill="#e8f8f8"/><rect x="268.5" y="542.8" width="8" height="1.5" fill="#e8f8f8"/>
<circle cx="283" cy="524.5" r="1"/><circle cx="286.5" cy="524.5" r="1"/><circle cx="283" cy="534" r="1"/><circle cx="286.5" cy="534" r="1"/><circle cx="283" cy="543.5" r="1"/><circle cx="286.5" cy="543.5" r="1"/></g>
<g stroke="#7ac8e0" stroke-width="0.9" fill="none"><path d="M247.8 521 v6 h-14"/><path d="M252 521 v4 q0 3 3 3 h8"/><path d="M226 488 v8 q0 4 4 4 h7"/><path d="M258 505 h12 v14"/></g>
<!-- orange robot left -->
<path d="M197 540 L185 514 L203 503 L214 510" stroke="#4a2a4a" stroke-width="6.4" stroke-linecap="round" fill="none"/><path d="M197 540 L185 514 L203 503 L214 510" stroke="#f59a3a" stroke-width="4.6" stroke-linecap="round" fill="none"/>
<circle cx="185" cy="514" r="3.5" fill="#f0a040" stroke="#4a2a6a" stroke-width="1.2"/>
<circle cx="203" cy="503" r="3" fill="#f0a040" stroke="#4a2a6a" stroke-width="1.2"/>
<circle cx="197" cy="533" r="3.5" fill="#f0a040" stroke="#4a2a6a" stroke-width="1.2"/>
<path d="M214 508 l5 -2 M214 512 l5 3" stroke="#6a3a4a" stroke-width="1.5"/>
<rect x="188" y="538" width="20" height="10" fill="#f59a3a"/><rect x="187" y="546" width="22" height="2.5" fill="#8a6ad8"/>
<!-- 10% ring -->
<circle cx="327.6" cy="523.6" r="17" fill="none" stroke="#6ac0c8" stroke-width="3.5"/>
<path d="M327.6 506.6 A17 17 0 0 1 340 512" fill="none" stroke="#f59a3a" stroke-width="3.5"/>
<text x="327.6" y="528.2" text-anchor="middle" textLength="25" lengthAdjust="spacingAndGlyphs" font-family="Liberation Sans" font-weight="bold" font-size="12.5" fill="#ffffff">10%</text>
<g font-family="Liberation Sans" font-size="10.6" fill="#eef4fb" stroke="#eef4fb" stroke-width="0.15">
<text x="354" y="517" textLength="114" lengthAdjust="spacingAndGlyphs">Tools like AI, IoT, and Robotics</text>
<text x="354" y="527.5" textLength="103" lengthAdjust="spacingAndGlyphs">are only “enablers,” not the</text>
<text x="354" y="538" textLength="68" lengthAdjust="spacingAndGlyphs">drivers of change.</text>
</g>
<!-- IoT chip -->
<g stroke="#8ad0c8" stroke-width="0.8"><path d="M531 483 v2 M535 483 v2 M539 483 v2 M531 498.5 v2 M535 498.5 v2 M539 498.5 v2 M526.5 488 h2 M526.5 492 h2 M526.5 496 h2 M542.8 488 h2 M542.8 492 h2 M542.8 496 h2"/></g>
<rect x="528.6" y="485" width="14.2" height="13.4" rx="1.5" fill="#8ad0c8" stroke="#1a3a5a" stroke-width="0.8"/>
<text x="535.7" y="494.2" text-anchor="middle" font-family="Liberation Sans" font-weight="bold" font-size="6" fill="#1a2a3a">IoT</text>
<g stroke="#4a90c8" stroke-width="0.9" fill="none" opacity="0.8"><path d="M528.6 491 h-20 M542.8 493 h8 v10 M535.7 498.4 v12"/></g>
<!-- screen -->
<rect x="511" y="530.3" width="39.8" height="17.7" fill="#8ab8e0" stroke="#c8e0f0" stroke-width="1"/>
<rect x="516" y="536" width="30" height="12" fill="#6a7ad0" opacity="0.6"/>
<!-- teal robot -->
<path d="M496 540 L487 518 L503.8 506.3 L519 516" stroke="#1a3a5a" stroke-width="6" stroke-linecap="round" fill="none"/><path d="M496 540 L487 518 L503.8 506.3 L519 516" stroke="#5ac8c8" stroke-width="4.2" stroke-linecap="round" fill="none"/>
<circle cx="487" cy="518" r="3.2" fill="#5ac8c8" stroke="#1a3a5a" stroke-width="1"/>
<circle cx="503.8" cy="506.3" r="3" fill="#5ac8c8" stroke="#1a3a5a" stroke-width="1"/>
<circle cx="495.9" cy="533" r="3.2" fill="#5ac8c8" stroke="#1a3a5a" stroke-width="1"/>
<rect x="488" y="538" width="16.7" height="10" fill="#5ac8c8" stroke="#1a3a5a" stroke-width="0.8"/><rect x="487" y="546" width="19" height="2.5" fill="#7a6ad8"/>
<path d="M517 517 l-1 4 M523 517 l1 4" stroke="#1a3a5a" stroke-width="1.2"/>
<rect x="518" y="521.4" width="4.5" height="7" fill="#f5a030" stroke="#5a3a1a" stroke-width="0.6"/>
<!-- orange robot right -->
<path d="M576.5 542 L589.8 513.4 L571.2 502.8 L556 510.8" stroke="#4a2a4a" stroke-width="6.4" stroke-linecap="round" fill="none"/><path d="M576.5 542 L589.8 513.4 L571.2 502.8 L556 510.8" stroke="#f59a3a" stroke-width="4.6" stroke-linecap="round" fill="none"/>
<circle cx="589.8" cy="513.4" r="3.6" fill="#f0a040" stroke="#4a2a6a" stroke-width="1.2"/>
<circle cx="571.2" cy="502.8" r="3" fill="#f0a040" stroke="#4a2a6a" stroke-width="1.2"/>
<circle cx="576.5" cy="532" r="3.6" fill="#f0a040" stroke="#4a2a6a" stroke-width="1.2"/>
<path d="M555 508 l-4 -2 M555 513 l-4 2" stroke="#6a3a4a" stroke-width="1.5"/>
<rect x="566" y="538" width="21" height="10" fill="#f59a3a" stroke="#4a2a4a" stroke-width="0.8"/><rect x="565" y="546" width="23" height="2.5" fill="#8a6ad8"/>
<g stroke="#5aa8d8" stroke-width="1" fill="none"><path d="M537 520 q5 -4 10 0 M539 523 q3 -2 6 0"/><path d="M586 497 q6 -5 12 0 M588.5 500 q3.5 -2.5 7 0"/></g>
<!-- bottom bar -->
<rect x="155.5" y="547.8" width="460.5" height="18" rx="3" fill="#1f3566" stroke="#14234a" stroke-width="1"/>
<text x="197.5" y="561" textLength="376" lengthAdjust="spacingAndGlyphs" font-family="Liberation Sans" font-size="9.5" fill="#e4e8f0">Technology provides the essential vertical and horizontal integration that supports the pillars and roof.</text>

<!-- NotebookLM -->
<text x="727" y="593" textLength="43" lengthAdjust="spacingAndGlyphs" font-family="Liberation Sans" font-weight="bold" font-size="8.2" fill="#161616">NotebookLM</text>
<path d="M716 593 A4.8 4.8 0 0 1 725.6 593 H723.6 A2.8 2.8 0 0 0 718 593 Z" fill="#1a1a1a"/><path d="M718.5 593 A2.3 2.3 0 0 1 723.1 593" stroke="#1a1a1a" stroke-width="0.9" fill="none"/>
<rect x="0" y="594.3" width="771" height="1.2" fill="#ffffff"/><rect x="0" y="595.6" width="771" height="1.8" fill="#220c48"/>
</svg>

</div>
<div class="a" style="left:772.2px;top:372px;width:3.6px;height:17px;background:#ececec;border-radius:2px;box-shadow:0 0 0 1px #000"></div>

<div id="panel"></div>
<div class="big" style="left:780px;top:182.8px;line-height:15px">šunrñnď</div>
<div class="big" style="left:893px;top:182.8px;line-height:15px">SUB</div>
<div class="sm" style="left:782px;top:207.4px"><svg width="9" height="11" viewBox="0 0 9 11"><rect x="3" y="0.5" width="3.6" height="6" rx="1.8" fill="#e0282e"/><path d="M1.6 5 C1.6 8.2 7.9 8.2 7.9 5 M4.8 8 V10.3 M3 10.3 H6.6" stroke="#e0282e" stroke-width="1" fill="none"/><path d="M0.8 10.5 L8.3 1" stroke="#e0282e" stroke-width="1.1"/></svg>šunrñnď</div>
<div class="sm" style="left:895px;top:207.4px"><svg width="9" height="11" viewBox="0 0 9 11"><rect x="3" y="0.5" width="3.6" height="6" rx="1.8" fill="#e0282e"/><path d="M1.6 5 C1.6 8.2 7.9 8.2 7.9 5 M4.8 8 V10.3 M3 10.3 H6.6" stroke="#e0282e" stroke-width="1" fill="none"/><path d="M0.8 10.5 L8.3 1" stroke="#e0282e" stroke-width="1.1"/></svg>SUB</div>
<div class="big" style="left:780px;top:246.3px;line-height:15px">Poodit</div>
<div class="big" style="left:893px;top:246.3px;line-height:15px">user</div>
<div class="sm" style="left:782px;top:270.9px"><svg width="9" height="11" viewBox="0 0 9 11"><rect x="3" y="0.5" width="3.6" height="6" rx="1.8" fill="#e0282e"/><path d="M1.6 5 C1.6 8.2 7.9 8.2 7.9 5 M4.8 8 V10.3 M3 10.3 H6.6" stroke="#e0282e" stroke-width="1" fill="none"/><path d="M0.8 10.5 L8.3 1" stroke="#e0282e" stroke-width="1.1"/></svg>Poodit</div>
<div class="sm" style="left:895px;top:270.9px"><svg width="9" height="11" viewBox="0 0 9 11"><rect x="3" y="0.5" width="3.6" height="6" rx="1.8" fill="#e0282e"/><path d="M1.6 5 C1.6 8.2 7.9 8.2 7.9 5 M4.8 8 V10.3 M3 10.3 H6.6" stroke="#e0282e" stroke-width="1" fill="none"/><path d="M0.8 10.5 L8.3 1" stroke="#e0282e" stroke-width="1.1"/></svg>user</div>
<div class="big" style="left:780px;top:309.8px;line-height:15px">Jantana Siri</div>
<div class="big" style="left:893px;top:309.8px;line-height:15px">Grace</div>
<div class="sm" style="left:782px;top:334.4px"><svg width="9" height="11" viewBox="0 0 9 11"><rect x="3" y="0.5" width="3.6" height="6" rx="1.8" fill="#e0282e"/><path d="M1.6 5 C1.6 8.2 7.9 8.2 7.9 5 M4.8 8 V10.3 M3 10.3 H6.6" stroke="#e0282e" stroke-width="1" fill="none"/><path d="M0.8 10.5 L8.3 1" stroke="#e0282e" stroke-width="1.1"/></svg>Jantana Siri</div>
<div class="sm" style="left:895px;top:334.4px"><svg width="9" height="11" viewBox="0 0 9 11"><rect x="3" y="0.5" width="3.6" height="6" rx="1.8" fill="#e0282e"/><path d="M1.6 5 C1.6 8.2 7.9 8.2 7.9 5 M4.8 8 V10.3 M3 10.3 H6.6" stroke="#e0282e" stroke-width="1" fill="none"/><path d="M0.8 10.5 L8.3 1" stroke="#e0282e" stroke-width="1.1"/></svg>Grace</div>
<div class="big" style="left:780px;top:373.3px;line-height:15px">Oh</div>
<div class="big" style="left:893px;top:373.3px;line-height:15px">Pre2</div>
<div class="sm" style="left:782px;top:397.9px"><svg width="9" height="11" viewBox="0 0 9 11"><rect x="3" y="0.5" width="3.6" height="6" rx="1.8" fill="#e0282e"/><path d="M1.6 5 C1.6 8.2 7.9 8.2 7.9 5 M4.8 8 V10.3 M3 10.3 H6.6" stroke="#e0282e" stroke-width="1" fill="none"/><path d="M0.8 10.5 L8.3 1" stroke="#e0282e" stroke-width="1.1"/></svg>Oh</div>
<div class="sm" style="left:895px;top:397.9px"><svg width="9" height="11" viewBox="0 0 9 11"><rect x="3" y="0.5" width="3.6" height="6" rx="1.8" fill="#e0282e"/><path d="M1.6 5 C1.6 8.2 7.9 8.2 7.9 5 M4.8 8 V10.3 M3 10.3 H6.6" stroke="#e0282e" stroke-width="1" fill="none"/><path d="M0.8 10.5 L8.3 1" stroke="#e0282e" stroke-width="1.1"/></svg>Pre2</div>
<div class="big" style="left:780px;top:436.8px;line-height:15px">PHINYO</div>
<div class="big" style="left:893px;top:436.8px;line-height:15px">A</div>
<div class="sm" style="left:782px;top:461.4px"><svg width="9" height="11" viewBox="0 0 9 11"><rect x="3" y="0.5" width="3.6" height="6" rx="1.8" fill="#e0282e"/><path d="M1.6 5 C1.6 8.2 7.9 8.2 7.9 5 M4.8 8 V10.3 M3 10.3 H6.6" stroke="#e0282e" stroke-width="1" fill="none"/><path d="M0.8 10.5 L8.3 1" stroke="#e0282e" stroke-width="1.1"/></svg>PHINYO</div>
<div class="sm" style="left:895px;top:461.4px"><svg width="9" height="11" viewBox="0 0 9 11"><rect x="3" y="0.5" width="3.6" height="6" rx="1.8" fill="#e0282e"/><path d="M1.6 5 C1.6 8.2 7.9 8.2 7.9 5 M4.8 8 V10.3 M3 10.3 H6.6" stroke="#e0282e" stroke-width="1" fill="none"/><path d="M0.8 10.5 L8.3 1" stroke="#e0282e" stroke-width="1.1"/></svg>A</div>
<div class="big" style="left:780px;top:500.3px;line-height:15px">Samsung SM...</div>
<div class="big" style="left:893px;top:500.3px;line-height:15px">ARKHOM</div>
<div class="sm" style="left:782px;top:524.9px"><svg width="9" height="11" viewBox="0 0 9 11"><rect x="3" y="0.5" width="3.6" height="6" rx="1.8" fill="#e0282e"/><path d="M1.6 5 C1.6 8.2 7.9 8.2 7.9 5 M4.8 8 V10.3 M3 10.3 H6.6" stroke="#e0282e" stroke-width="1" fill="none"/><path d="M0.8 10.5 L8.3 1" stroke="#e0282e" stroke-width="1.1"/></svg>Samsung SM-S928B</div>
<div class="sm" style="left:895px;top:524.9px"><svg width="9" height="11" viewBox="0 0 9 11"><rect x="3" y="0.5" width="3.6" height="6" rx="1.8" fill="#e0282e"/><path d="M1.6 5 C1.6 8.2 7.9 8.2 7.9 5 M4.8 8 V10.3 M3 10.3 H6.6" stroke="#e0282e" stroke-width="1" fill="none"/><path d="M0.8 10.5 L8.3 1" stroke="#e0282e" stroke-width="1.1"/></svg>ARKHOM</div>
<div class="big" style="left:780px;top:563.8px;line-height:15px">#19444 lŵĩg...</div>
<div class="big" style="left:893px;top:563.8px;line-height:15px">saranyu.t</div>
<div class="sm" style="left:782px;top:588.4px"><svg width="9" height="11" viewBox="0 0 9 11"><rect x="3" y="0.5" width="3.6" height="6" rx="1.8" fill="#e0282e"/><path d="M1.6 5 C1.6 8.2 7.9 8.2 7.9 5 M4.8 8 V10.3 M3 10.3 H6.6" stroke="#e0282e" stroke-width="1" fill="none"/><path d="M0.8 10.5 L8.3 1" stroke="#e0282e" stroke-width="1.1"/></svg>#19444 lŵĩgwssun&nbsp; ŝo...</div>
<div class="sm" style="left:895px;top:588.4px"><svg width="9" height="11" viewBox="0 0 9 11"><rect x="3" y="0.5" width="3.6" height="6" rx="1.8" fill="#e0282e"/><path d="M1.6 5 C1.6 8.2 7.9 8.2 7.9 5 M4.8 8 V10.3 M3 10.3 H6.6" stroke="#e0282e" stroke-width="1" fill="none"/><path d="M0.8 10.5 L8.3 1" stroke="#e0282e" stroke-width="1.1"/></svg>saranyu.t</div>

<div class="lbl" style="left:-6.3px;width:80px">Audio</div>
<div class="lbl" style="left:56.5px;width:80px">Video</div>
<div class="lbl" style="left:223.0px;width:80px">Participants</div>
<div class="lbl" style="left:295.3px;width:80px">Chat</div>
<div class="lbl" style="left:355.4px;width:80px">React</div>
<div class="lbl" style="left:415.2px;width:80px">Share</div>
<div class="lbl" style="left:475.1px;width:80px">Host tools</div>
<div class="lbl" style="left:537.4px;width:80px">AI Companion</div>
<div class="lbl" style="left:601.4px;width:80px">Record</div>
<div class="lbl" style="left:666.8px;width:80px">Show captions</div>
<div class="lbl" style="left:733.2px;width:80px">Whiteboards</div>
<div class="lbl" style="left:792.8px;width:80px">More</div>
<div class="lbl" style="left:943.9px;width:80px">Leave</div>
<svg class="a" style="left:24px;top:658px" width="20" height="20" viewBox="0 0 20 20"><rect x="7.3" y="2" width="5.4" height="9.5" rx="2.7" stroke="#e9e9e9" stroke-width="1.3" fill="none"/><path d="M4.5 8.5 C4.5 15 15.5 15 15.5 8.5 M10 13.8 V17.8 M6.8 18 H13.2" stroke="#e9e9e9" stroke-width="1.3" fill="none"/><path d="M1.5 18.5 L18.5 2" stroke="#14171a" stroke-width="3"/><path d="M1.5 18.5 L18.5 2" stroke="#ee2a62" stroke-width="1.8"/></svg>
<svg class="a" style="left:52.5px;top:665px" width="8" height="6" viewBox="0 0 8 6"><path d="M1 4.8 L4 1.5 L7 4.8" stroke="#d8d8d8" stroke-width="1.2" fill="none"/></svg>
<svg class="a" style="left:86px;top:658px" width="21" height="20" viewBox="0 0 21 20"><rect x="2" y="5" width="12" height="10" rx="2" stroke="#e9e9e9" stroke-width="1.3" fill="none"/><path d="M14 8.5 L19 5.5 V14.5 L14 11.5" stroke="#e9e9e9" stroke-width="1.3" fill="none"/><path d="M2 18.5 L19 2" stroke="#14171a" stroke-width="3"/><path d="M2 18.5 L19 2" stroke="#ee2a62" stroke-width="1.8"/></svg>
<svg class="a" style="left:116px;top:665px" width="8" height="6" viewBox="0 0 8 6"><path d="M1 4.8 L4 1.5 L7 4.8" stroke="#d8d8d8" stroke-width="1.2" fill="none"/></svg>
<svg class="a" style="left:255px;top:661px" width="16" height="16" viewBox="0 0 16 16"><circle cx="5" cy="4" r="2.6" stroke="#e9e9e9" stroke-width="1.2" fill="none"/><path d="M1 14.5 V11.5 C1 9 3 8 5 8 C6.5 8 7.5 8.5 8 9" stroke="#e9e9e9" stroke-width="1.2" fill="none"/><circle cx="11" cy="8" r="2.3" stroke="#e9e9e9" stroke-width="1.2" fill="none"/><rect x="7.2" y="11.3" width="7.8" height="3.6" rx="1.8" stroke="#e9e9e9" stroke-width="1.2" fill="none"/></svg>
<div class="a" style="left:273.5px;top:663px;color:#d0d0d0;font-size:9px">24</div>
<svg class="a" style="left:292px;top:665px" width="8" height="6" viewBox="0 0 8 6"><path d="M1 4.8 L4 1.5 L7 4.8" stroke="#d8d8d8" stroke-width="1.2" fill="none"/></svg>
<svg class="a" style="left:326px;top:660px" width="19" height="17" viewBox="0 0 19 17"><path d="M6 3.5 C6.5 2 8 1 10 1 H14 C16.5 1 18 2.6 18 5 V7 C18 9 17 10.5 15 11" stroke="#e9e9e9" stroke-width="1.2" fill="none"/><path d="M5 4 H11 C13.5 4 15 5.6 15 8 V10 C15 12.5 13.5 14 11 14 H6 L3 16.2 V13.6 C1.8 13 1 11.8 1 10 V8 C1 5.6 2.5 4 5 4 Z" stroke="#e9e9e9" stroke-width="1.2" fill="#14171a"/><circle cx="5.2" cy="9" r="0.9" fill="#e9e9e9"/><circle cx="8" cy="9" r="0.9" fill="#e9e9e9"/><circle cx="10.8" cy="9" r="0.9" fill="#e9e9e9"/></svg>
<svg class="a" style="left:354.5px;top:665px" width="8" height="6" viewBox="0 0 8 6"><path d="M1 4.8 L4 1.5 L7 4.8" stroke="#d8d8d8" stroke-width="1.2" fill="none"/></svg>
<svg class="a" style="left:386px;top:661px" width="19" height="16" viewBox="0 0 19 16"><path d="M9.5 14.8 C5 11.8 1 8.8 1 5.2 C1 2.8 2.9 1 5.1 1 C7 1 8.5 2 9.5 3.6 C10.5 2 12 1 13.9 1 C16.1 1 18 2.8 18 5.2 C18 8.8 14 11.8 9.5 14.8 Z" stroke="#e9e9e9" stroke-width="1.3" fill="none"/></svg>
<svg class="a" style="left:411.5px;top:665px" width="8" height="6" viewBox="0 0 8 6"><path d="M1 4.8 L4 1.5 L7 4.8" stroke="#d8d8d8" stroke-width="1.2" fill="none"/></svg>
<svg class="a" style="left:446px;top:661px" width="19" height="15" viewBox="0 0 19 15"><rect x="0.5" y="0.5" width="18" height="14" rx="2.5" fill="#1fe07c"/><path d="M9.5 11.5 V4 M6.3 7 L9.5 3.6 L12.7 7" stroke="#0b0b0b" stroke-width="1.8" fill="none"/></svg>
<svg class="a" style="left:474.5px;top:665px" width="8" height="6" viewBox="0 0 8 6"><path d="M1 4.8 L4 1.5 L7 4.8" stroke="#d8d8d8" stroke-width="1.2" fill="none"/></svg>
<svg class="a" style="left:508px;top:661px" width="15" height="16" viewBox="0 0 15 16"><path d="M7.5 1 L13.5 3 V7.5 C13.5 11 11 13.6 7.5 15 C4 13.6 1.5 11 1.5 7.5 V3 Z" stroke="#e9e9e9" stroke-width="1.3" fill="none"/><path d="M7.5 3.2 V8 H3.3 C3.5 5.5 3.5 4.5 3.5 4.5 Z M7.5 8 H11.8 C11.5 10.5 9.8 12.2 7.5 13 Z" fill="#e9e9e9"/></svg>
<svg class="a" style="left:568px;top:658px" width="22" height="21" viewBox="0 0 22 21"><defs><radialGradient id="sp" cx="0.5" cy="0.5" r="0.6"><stop offset="0" stop-color="#8fd0f0"/><stop offset="0.6" stop-color="#c6e8fa"/><stop offset="1" stop-color="#ffffff"/></radialGradient></defs><path d="M9.7 2.3 C10.5 7.6 12 9.7 17.6 10.5 C12 11.3 10.5 13.4 9.7 18.8 C8.9 13.4 7.4 11.3 1.8 10.5 C7.4 9.7 8.9 7.6 9.7 2.3 Z" fill="url(#sp)"/><path d="M16.4 1.6 C16.7 3.4 17.2 4 19 4.4 C17.2 4.8 16.7 5.4 16.4 7.2 C16.1 5.4 15.6 4.8 13.8 4.4 C15.6 4 16.1 3.4 16.4 1.6 Z" fill="#f4fbff"/></svg>
<svg class="a" style="left:632px;top:660px" width="18" height="17" viewBox="0 0 18 17"><circle cx="9" cy="8.5" r="7.6" stroke="#e9e9e9" stroke-width="1.3" fill="none"/><circle cx="9" cy="8.5" r="3.4" fill="#e9e9e9"/></svg>
<svg class="a" style="left:697px;top:661px" width="20" height="15" viewBox="0 0 20 15"><rect x="1" y="1" width="18" height="13" rx="2.5" stroke="#e9e9e9" stroke-width="1.3" fill="none"/><text x="10" y="10.6" text-anchor="middle" font-family="Liberation Sans" font-weight="bold" font-size="7.5" fill="#e9e9e9">CC</text></svg>
<svg class="a" style="left:729.5px;top:665px" width="8" height="6" viewBox="0 0 8 6"><path d="M1 4.8 L4 1.5 L7 4.8" stroke="#d8d8d8" stroke-width="1.2" fill="none"/></svg>
<svg class="a" style="left:763px;top:660px" width="20" height="17" viewBox="0 0 20 17"><path d="M11 14 H3 C2 14 1 13 1 12 V3 C1 2 2 1 3 1 H17 C18 1 19 2 19 3 V11" stroke="#e9e9e9" stroke-width="1.3" fill="none"/><rect x="12" y="12.5" width="7.5" height="3.5" rx="1.7" fill="#e9e9e9"/></svg>
<svg class="a" style="left:791.5px;top:665px" width="8" height="6" viewBox="0 0 8 6"><path d="M1 4.8 L4 1.5 L7 4.8" stroke="#d8d8d8" stroke-width="1.2" fill="none"/></svg>
<svg class="a" style="left:823px;top:660px" width="20" height="17" viewBox="0 0 20 17"><circle cx="10" cy="8.5" r="8" stroke="#e9e9e9" stroke-width="1.3" fill="none"/><circle cx="6.3" cy="8.5" r="1.1" fill="#e9e9e9"/><circle cx="10" cy="8.5" r="1.1" fill="#e9e9e9"/><circle cx="13.7" cy="8.5" r="1.1" fill="#e9e9e9"/></svg>
<svg class="a" style="left:974px;top:659px" width="20" height="19" viewBox="0 0 20 19"><path d="M8 0.8 L18.5 1.6 V14 L13.2 17 V4.2 Z" stroke="#e8235a" stroke-width="1.6" fill="none" stroke-linejoin="round"/><circle cx="8" cy="4.8" r="1.9" stroke="#f0f0f0" stroke-width="1.3" fill="none"/><path d="M7.6 7.2 L6.6 11.6 M7.6 7.6 L4.6 9.2 L4.2 11.6 M7.6 7.6 L10 9.2 L11.6 11 M6.6 11.6 L9 14 L9.6 17.2 M6.6 11.6 L4.6 14.6 L3 17" stroke="#f0f0f0" stroke-width="1.7" fill="none" stroke-linecap="round" stroke-linejoin="round"/></svg>
</body></html>
